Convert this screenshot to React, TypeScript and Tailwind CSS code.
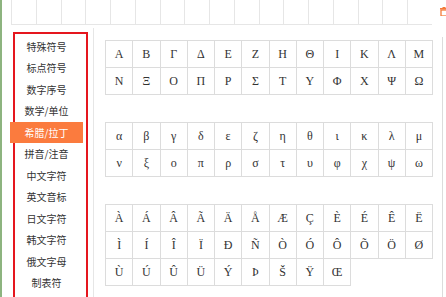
const menu = [
  "特殊符号",
  "标点符号",
  "数字序号",
  "数学/单位",
  "希腊/拉丁",
  "拼音/注音",
  "中文字符",
  "英文音标",
  "日文字符",
  "韩文字符",
  "俄文字母",
  "制表符",
];

const tables: string[] = [
  "ΑΒΓΔΕΖΗΘΙΚΛΜΝΞΟΠΡΣΤΥΦΧΨΩ",
  "αβγδεζηθικλμνξοπρστυφχψω",
  "ÀÁÂÃÄÅÆÇÈÉÊËÌÍÎÏÐÑÒÓÔÕÖØÙÚÛÜÝÞŠŸŒ",
];

function CharTable({ chars }: { chars: string }) {
  return (
    <div className="grid w-fit grid-cols-[repeat(12,27.25px)] border-l border-t border-[#dcdcdc]">
      {Array.from(chars).map((c, i) => (
        <div
          key={i}
          className="flex h-[27px] items-center justify-center border-b border-r border-[#dcdcdc] font-['Liberation_Serif',serif] text-[12px] text-[#333]"
        >
          {c}
        </div>
      ))}
    </div>
  );
}

export default function App() {
  return (
    <div className="flex h-[297px] w-[446px] overflow-hidden bg-white">
      <div className="w-[2px] shrink-0 bg-[#8db47f]" />

      <div className="flex flex-1 flex-col">
        {/* leftover row of the previous grid */}
        <div className="flex h-[25px] shrink-0 pl-[9px]">
          {Array.from({ length: 17 }).map((_, i) => (
            <div key={i} className="h-[25px] w-[24.76px] border-b border-l border-[#e6e6e6] last:border-r" />
          ))}
          <div className="ml-[8px] mt-[7px]">
            <svg width="8" height="9" viewBox="0 0 8 9">
              <rect x="0" y="1" width="8" height="1.5" fill="#f47b3a" />
              <rect x="2.5" y="0" width="3" height="1.5" fill="#f47b3a" />
              <rect x="1" y="3" width="6" height="6" fill="none" stroke="#f47b3a" strokeWidth="1.3" />
            </svg>
          </div>
        </div>

        <div className="flex flex-1">
          {/* category menu */}
          <div className="pl-[11px] pt-[7px]">
            <div className="w-[75px] border-2 border-[#e5161e] pb-[12px] pt-[1.5px]">
              {menu.map((m, i) => (
                <div
                  key={m}
                  className={
                    i === 4
                      ? "-ml-[5px] flex h-[21.5px] w-[73px] items-center justify-center bg-[#fb7b3e] font-['Noto_Sans_CJK_SC',sans-serif] text-[10px] text-white"
                      : "-ml-[5px] flex h-[21.5px] w-[73px] items-center justify-center font-['Noto_Sans_CJK_SC',sans-serif] text-[10px] text-[#333]"
                  }
                >
                  {m}
                </div>
              ))}
            </div>
          </div>

          {/* symbol panel */}
          <div className="ml-[5px] mt-[3px] flex flex-1 border-l border-[#e6e6e6]">
            <div className="flex flex-col gap-[27px] pl-[11px] pt-[12px]">
              {tables.map((t, i) => (
                <CharTable key={i} chars={t} />
              ))}
            </div>
            <div className="ml-[9px] mt-[9px] w-[3px] border-l border-[#dcdcdc]" />
          </div>
        </div>
      </div>
    </div>
  );
}
